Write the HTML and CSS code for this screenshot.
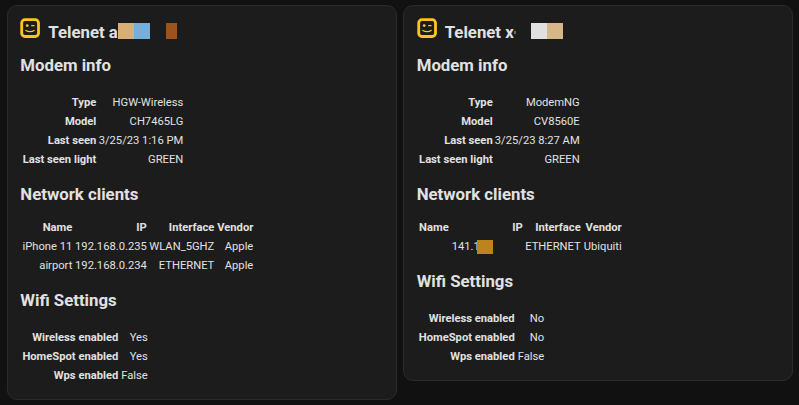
FILE: index.html
```html
<!DOCTYPE html>
<html lang="en">
<head>
<meta charset="utf-8">
<title>Telenet modems</title>
<link rel="stylesheet" href="styles.css">
</head>
<body>
<svg class="defs" width="0" height="0">
  <symbol id="face" viewBox="0 0 20 20">
    <rect x="1.7" y="1.7" width="16.8" height="16.8" rx="3.2" fill="none" stroke="#ffc421" stroke-width="2.8"/>
    <circle cx="7.2" cy="7.6" r="1.4" fill="#ffc421"/>
    <path d="M11.2 7.6h3.3M5.4 12.2q4.6 3 9.2 0" fill="none" stroke="#ffc421" stroke-width="1.25"/>
  </symbol>
</svg>
<main class="board">
  <section class="card">
    <header class="title"><svg class="logo"><use href="#face"/></svg><h2>Telenet a</h2><span class="mask"><i class="tan"></i><i class="blue"></i><i class="gap"></i><i class="brown"></i></span></header>
    <h2>Modem info</h2>
    <table class="modem">
      <colgroup><col class="label"><col class="value"></colgroup>
      <tr><th>Type</th><td>HGW-Wireless</td></tr>
      <tr><th>Model</th><td>CH7465LG</td></tr>
      <tr><th>Last seen</th><td>3/25/23 1:16 PM</td></tr>
      <tr><th>Last seen light</th><td>GREEN</td></tr>
    </table>
    <h2>Network clients</h2>
    <table class="clients">
      <colgroup><col class="name"><col class="ip"><col class="interface"><col class="vendor"></colgroup>
      <tr><th>Name</th><th>IP</th><th>Interface</th><th>Vendor</th></tr>
      <tr><td>iPhone 11</td><td>192.168.0.235</td><td>WLAN_5GHZ</td><td>Apple</td></tr>
      <tr><td>airport</td><td>192.168.0.234</td><td>ETHERNET</td><td>Apple</td></tr>
    </table>
    <h2>Wifi Settings</h2>
    <table class="wifi">
      <colgroup><col class="label"><col class="value"></colgroup>
      <tr><th>Wireless enabled</th><td>Yes</td></tr>
      <tr><th>HomeSpot enabled</th><td>Yes</td></tr>
      <tr><th>Wps enabled</th><td>False</td></tr>
    </table>
  </section>
  <section class="card second">
    <header class="title"><svg class="logo"><use href="#face"/></svg><h2>Telenet x</h2><span class="mask"><b class="dot"></b><i class="white"></i><i class="sand"></i></span></header>
    <h2>Modem info</h2>
    <table class="modem">
      <colgroup><col class="label"><col class="value"></colgroup>
      <tr><th>Type</th><td>ModemNG</td></tr>
      <tr><th>Model</th><td>CV8560E</td></tr>
      <tr><th>Last seen</th><td>3/25/23 8:27 AM</td></tr>
      <tr><th>Last seen light</th><td>GREEN</td></tr>
    </table>
    <h2>Network clients</h2>
    <table class="clients">
      <colgroup><col class="name"><col class="ip"><col class="interface"><col class="vendor"></colgroup>
      <tr><th>Name</th><th>IP</th><th>Interface</th><th>Vendor</th></tr>
      <tr><td></td><td class="masked-ip"><span>141.1<i></i></span></td><td>ETHERNET</td><td>Ubiquiti</td></tr>
    </table>
    <h2>Wifi Settings</h2>
    <table class="wifi">
      <colgroup><col class="label"><col class="value"></colgroup>
      <tr><th>Wireless enabled</th><td>No</td></tr>
      <tr><th>HomeSpot enabled</th><td>No</td></tr>
      <tr><th>Wps enabled</th><td>False</td></tr>
    </table>
  </section>
</main>
</body>
</html>
```
FILE: styles.css
```css
* { box-sizing: border-box; }
body {
  margin: 0;
  background: #111;
  color: #e1e1e1;
  font: 11.2px/19px Roboto, "Liberation Sans", sans-serif;
  overflow: hidden;
}
.defs { display: block; }
.board {
  display: grid;
  grid-template-columns: 390px 390px;
  gap: 6.4px;
  padding: 5px 7px;
  align-items: start;
}
.card {
  height: 395px;
  padding: 12px 12.3px;
  background: #1c1c1c;
  border: 1px solid #2b2b2b;
  border-radius: 10px;
}
.second { height: 376px; }
h2 {
  margin: 0;
  height: 24px;
  font-size: 16.8px;
  font-weight: 700;
  line-height: 24px;
  white-space: nowrap;
}
.title { display: flex; height: 35px; }
.title h2 { margin: 2px 0 0 8px; }
.logo { width: 20px; height: 20px; flex: none; }
.mask { display: flex; height: 16px; margin-top: 5px; }
.mask i { width: 16px; }
.tan { background: #d8b077; }
.blue { background: #78afd8; }
.mask .brown { width: 11px; background: #9b541d; }
.white { background: #e0e0e0; }
.sand { background: #d7b788; }
.dot { width: 2px; height: 3px; margin: 8px 15px 0 0; background: #527078; }
table {
  table-layout: fixed;
  border-collapse: collapse;
  margin: 16px 0 13px;
}
.card .clients { margin: 12px 0 13px; }
.card .wifi { margin: 16px 0 0; }
tr { height: 19px; }
th, td { padding: 0; text-align: right; white-space: nowrap; }
th { font-weight: 700; }
.modem { width: 163px; }
.modem .label { width: 76px; }
.modem .value { width: 87px; }
.clients { width: 233px; }
.clients .name { width: 52px; }
.clients .ip { width: 74.5px; }
.clients .interface { width: 67.5px; }
.clients .vendor { width: 39px; }
.second .clients { width: 205px; }
.second .clients .name { width: 32px; }
.second .clients .ip { width: 74px; }
.second .clients .interface { width: 58px; }
.second .clients .vendor { width: 41px; }
.wifi { width: 127.5px; }
.wifi .label { width: 98px; }
.wifi .value { width: 29.5px; }
.masked-ip { text-align: left; padding-left: 3px; }
.masked-ip span { position: relative; }
.masked-ip i {
  position: absolute;
  left: 25px;
  top: 0;
  width: 16px;
  height: 14px;
  background: #bc841d;
}
```
